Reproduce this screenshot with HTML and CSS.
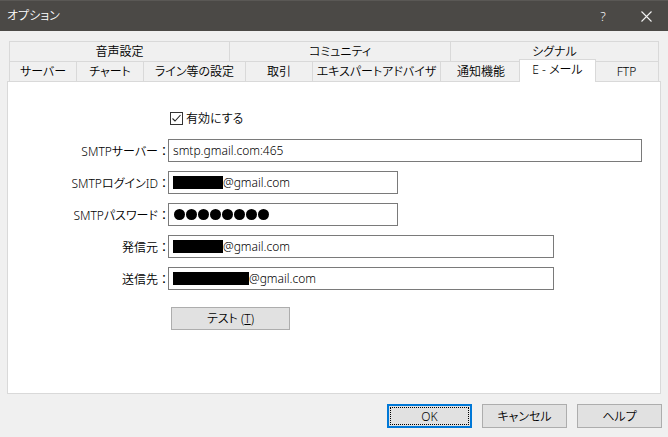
FILE: index.html
```html
<!DOCTYPE html>
<html lang="ja">
<head>
<meta charset="utf-8">
<title>オプション</title>
<link rel="stylesheet" href="styles.css">
</head>
<body>
<div class="titlebar">
  <span class="title">オプション</span>
  <span class="help">?</span>
  <span class="close"><svg width="11" height="11" viewBox="0 0 11 11"><path d="M0.5 0.5L10.5 10.5M10.5 0.5L0.5 10.5" stroke="#f2f2f2" stroke-width="1.1" fill="none"/></svg></span>
</div>
<div class="dialog">
  <div class="tabs">
    <div class="tabrow">
      <div class="tab t-sound">音声設定</div>
      <div class="tab t-comm">コミュニティ</div>
      <div class="tab t-signal last">シグナル</div>
    </div>
    <div class="tabrow">
      <div class="tab t-server">サーバー</div>
      <div class="tab t-chart">チャート</div>
      <div class="tab t-line">ライン等の設定</div>
      <div class="tab t-trade">取引</div>
      <div class="tab t-ea">エキスパートアドバイザ</div>
      <div class="tab t-notify">通知機能</div>
      <div class="tab t-mail selected">E - メール</div>
      <div class="tab t-ftp last">FTP</div>
    </div>
  </div>
  <div class="panel">
    <div class="check-row">
      <span class="checkbox"><svg width="11" height="11" viewBox="0 0 11 11"><path d="M1.5 5.5L4 8L9.5 2" stroke="#222" stroke-width="1.1" fill="none"/></svg></span>
      <span class="check-label">有効にする</span>
    </div>
    <div class="form">
      <div class="row">
        <label class="lbl">SMTPサーバー<span class="colon">：</span></label>
        <div class="field f-wide">smtp.gmail.com:465</div>
      </div>
      <div class="row">
        <label class="lbl">SMTPログインID<span class="colon">：</span></label>
        <div class="field f-short"><span class="redact r-50"></span>@gmail.com</div>
      </div>
      <div class="row">
        <label class="lbl">SMTPパスワード<span class="colon">：</span></label>
        <div class="field f-short"><span class="dots"><i></i><i></i><i></i><i></i><i></i><i></i><i></i><i></i></span></div>
      </div>
      <div class="row">
        <label class="lbl">発信元<span class="colon">：</span></label>
        <div class="field f-mid"><span class="redact r-50"></span>@gmail.com</div>
      </div>
      <div class="row">
        <label class="lbl">送信先<span class="colon">：</span></label>
        <div class="field f-mid"><span class="redact r-76"></span>@gmail.com</div>
      </div>
    </div>
    <button class="btn test-btn">テスト (<u>T</u>)</button>
  </div>
  <div class="actions">
    <button class="btn default">OK</button>
    <button class="btn">キャンセル</button>
    <button class="btn">ヘルプ</button>
  </div>
</div>
</body>
</html>
```

FILE: styles.css
```css
* { box-sizing: border-box; }
html, body { margin: 0; padding: 0; }
body {
  width: 668px;
  height: 437px;
  overflow: hidden;
  background: #f0f0f0;
  font-family: "Noto Sans", "Noto Sans CJK JP", sans-serif;
  font-size: 12px;
  font-weight: 350;
  color: #000;
  font-feature-settings: "palt" 1;
}

.titlebar {
  height: 31px;
  background: #4b4946;
  border-top: 1px solid #5a5855;
  display: flex;
  align-items: center;
  color: #fff;
  padding-left: 7px;
}
.title { flex: 1; font-size: 12px; line-height: 16px; }
.help { width: 16px; text-align: center; font-size: 13px; margin-right: 30px; }
.close { width: 11px; height: 11px; display: flex; margin-right: 16px; }

.dialog { padding-top: 10px; }

.tabs { margin-left: 9px; }
.tabrow { display: flex; }
.tab {
  height: 20px;
  border-top: 1px solid #d9d9d9;
  border-left: 1px solid #d9d9d9;
  background: #f0f0f0;
  text-align: center;
  line-height: 18px;
  padding-top: 1px;
  white-space: nowrap;
}
.tab.last { border-right: 1px solid #d9d9d9; }
.t-sound { width: 220px; }
.t-comm { width: 221px; }
.t-signal { width: 209px; }
.t-server { width: 67px; }
.t-chart { width: 67px; }
.t-line { width: 102px; }
.t-trade { width: 67px; }
.t-ea { width: 128px; }
.t-notify { width: 81px; }
.t-mail { width: 73px; }
.t-ftp { width: 65px; }
.tab.selected {
  position: relative;
  z-index: 1;
  width: 77px;
  height: 23px;
  margin: -2px -2px -1px -2px;
  background: #fff;
  border-right: 1px solid #d9d9d9;
  padding-top: 1px;
}

.panel {
  margin-left: 7px;
  width: 654px;
  height: 313px;
  background: #fff;
  border: 1px solid #d9d9d9;
  padding-top: 30px;
}

.check-row {
  display: flex;
  align-items: center;
  height: 13px;
  margin-left: 162px;
  margin-bottom: 14px;
}
.checkbox {
  width: 13px;
  height: 13px;
  border: 1px solid #333;
  background: #fff;
  display: flex;
  align-items: center;
  justify-content: center;
}
.check-label { margin-left: 3px; line-height: 13px; }

.form { display: flex; flex-direction: column; gap: 9px; }
.row { display: flex; align-items: center; height: 23px; }
.lbl {
  width: 162px;
  text-align: right;
  margin-right: -2px;
  white-space: nowrap;
}
.colon {
  display: inline-block;
  width: 12px;
  text-align: center;
  font-feature-settings: normal;
}
.field {
  height: 23px;
  border: 1px solid #7a7a7a;
  background: #fff;
  display: flex;
  align-items: center;
  padding-left: 4px;
  white-space: nowrap;
}
.f-wide { width: 474px; }
.f-short { width: 230px; }
.f-mid { width: 386px; }

.redact {
  display: inline-block;
  height: 13px;
  background: #000;
}
.r-50 { width: 50px; }
.r-76 { width: 76px; }

.dots { display: flex; gap: 1px; padding-left: 1px; }
.dots i {
  display: block;
  width: 11px;
  height: 11px;
  border-radius: 50%;
  background: #000;
}

.btn {
  font-family: inherit;
  font-size: 12px;
  font-weight: 350;
  font-feature-settings: "palt" 1;
  color: #000;
  background: #e1e1e1;
  border: 1px solid #adadad;
  height: 23px;
  padding: 0;
  line-height: 19px;
  margin: 0;
}
.test-btn {
  display: block;
  width: 119px;
  margin: 17px 0 0 163px;
}

.actions {
  display: flex;
  justify-content: flex-end;
  gap: 10px;
  padding-right: 6px;
  margin-top: 10px;
}
.actions .btn { width: 85px; height: 24px; }
.btn.default {
  position: relative;
  border: 2px solid #0078d7;
}
.btn.default::after {
  content: "";
  position: absolute;
  inset: 1px;
  border: 1px dotted #000;
}
```
